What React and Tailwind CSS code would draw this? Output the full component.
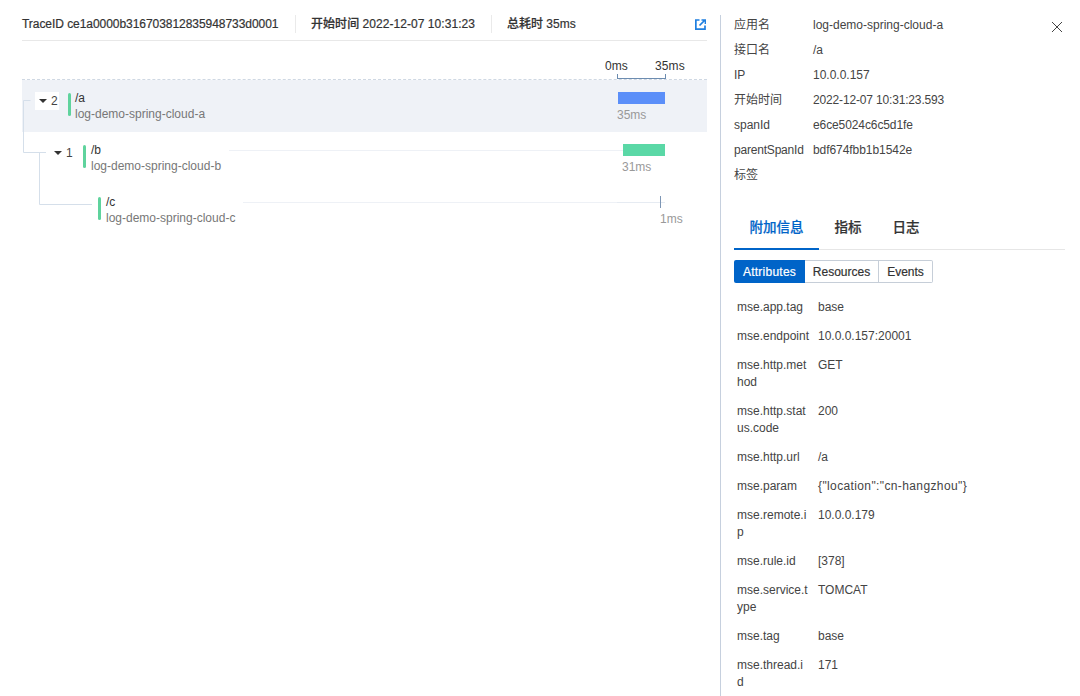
const FONT = "font-['Liberation_Sans','Noto_Sans_CJK_SC',sans-serif]";
const MEDIUM = "[-webkit-text-stroke:0.2px_currentColor]";

const spans = [
  { depth: 0, count: 2, name: "/a", app: "log-demo-spring-cloud-a", active: true, ms: "35ms", bar: "bg-[#5b8ff9]", left: 1, labelLeft: 0, width: 47, lineFrom: null },
  { depth: 1, count: 1, name: "/b", app: "log-demo-spring-cloud-b", active: false, ms: "31ms", bar: "bg-[#5ad8a6]", left: 6, labelLeft: 5, width: 42, lineFrom: 229 },
  { depth: 2, count: null, name: "/c", app: "log-demo-spring-cloud-c", active: false, ms: "1ms", bar: null, left: 43, labelLeft: 43, width: 1, lineFrom: 243 },
];

const info = [
  ["应用名", "log-demo-spring-cloud-a", ""],
  ["接口名", "/a", ""],
  ["IP", "10.0.0.157", ""],
  ["开始时间", "2022-12-07 10:31:23.593", "tracking-[-0.16px]"],
  ["spanId", "e6ce5024c6c5d1fe", "tracking-[-0.1px]"],
  ["parentSpanId", "bdf674fbb1b1542e", "tracking-[-0.06px]"],
  ["标签", "", ""],
];

const attrs = [
  ["mse.app.tag", "base", ""],
  ["mse.endpoint", "10.0.0.157:20001", "whitespace-nowrap"],
  ["mse.http.method", "GET", ""],
  ["mse.http.status.code", "200", ""],
  ["mse.http.url", "/a", ""],
  ["mse.param", '{"location":"cn-hangzhou"}', ""],
  ["mse.remote.ip", "10.0.0.179", ""],
  ["mse.rule.id", "[378]", ""],
  ["mse.service.type", "TOMCAT", ""],
  ["mse.tag", "base", ""],
  ["mse.thread.id", "171", ""],
];

function Row({ s }) {
  const toggleLeft = [13, 28, 0][s.depth];
  const barLeft = [46, 61, 76][s.depth];
  const textLeft = [53, 69, 84][s.depth];
  return (
    <div className={`relative h-[52px] ${s.active ? "bg-[#eff2f7]" : ""}`}>
      {s.count !== null && (
        <div
          className={`absolute top-[12px] flex h-[18px] items-center gap-[4px] pl-[4px] pr-[1px] text-[12px] text-[#444] ${s.active ? "bg-white" : ""}`}
          style={{ left: toggleLeft }}
        >
          <span className="h-0 w-0 border-x-[4px] border-t-[4px] border-x-transparent border-t-[#333]" />
          <span>{s.count}</span>
        </div>
      )}
      <div className="absolute top-[13px] h-[23px] w-[3px] rounded-[2px] bg-[#5fd39d]" style={{ left: barLeft }} />
      <div className="absolute top-[10px]" style={{ left: textLeft }}>
        <div className="h-[16px] text-[12px] leading-[16px] text-[#333]">{s.name}</div>
        <div className="h-[16px] whitespace-nowrap text-[12px] leading-[16px] text-[#777]">{s.app}</div>
      </div>
      {s.lineFrom && (
        <div
          className="absolute top-[18px] h-px bg-[#eef1f6]"
          style={{ left: s.lineFrom - 22, width: 643 - s.lineFrom + 22 }}
        />
      )}
      <div className="absolute left-[595px] top-0 h-full w-[48px]">
        {s.bar ? (
          <div className={`absolute top-[12px] h-[12px] ${s.bar}`} style={{ left: s.left, width: s.width }} />
        ) : (
          <>
            <div className="absolute left-0 top-[18px] h-px w-[48px] bg-[#e6ebf2]" />
            <div className="absolute top-[12px] h-[12px] w-px bg-[#7d96b5]" style={{ left: s.left }} />
          </>
        )}
        <div
          className="absolute top-[27px] whitespace-nowrap text-[12px] leading-[16px] text-[#999]"
          style={{ left: s.labelLeft }}
        >
          {s.ms}
        </div>
      </div>
    </div>
  );
}

function Trace() {
  return (
    <div className="w-[720px] shrink-0 pl-[22px] pr-[13px] pt-[8px]">
      <div className={`relative flex h-[33px] items-start border-b border-[#e8e8e8] pt-[7px] text-[12px] font-medium leading-[18px] text-[#333] ${MEDIUM}`}>
        <span className="w-[273px] whitespace-nowrap tracking-[-0.05px]">TraceID ce1a0000b316703812835948733d0001</span>
        <span className="mr-[15px] h-[18px] w-px bg-[#eaeaea]" />
        <span className="w-[180px] whitespace-nowrap tracking-[0.05px]">开始时间 2022-12-07 10:31:23</span>
        <span className="mr-[15px] h-[18px] w-px bg-[#eaeaea]" />
        <span className="whitespace-nowrap">总耗时 35ms</span>
        <svg className="absolute right-[1px] top-[11px] h-[11px] w-[11px]" viewBox="0 0 11 11" fill="none" stroke="#1f7fe0" strokeWidth="1.7">
          <path d="M4.5 1H.85v9.15H10V6.5" />
          <path d="M4.5 6.5L9.5 1.5M6.5 1h4v4" />
        </svg>
      </div>
      <div className="relative h-[39px] border-b border-dashed border-[#cfd8e3] text-[12px] text-[#333]">
        <span className="absolute left-[583px] top-[17px] leading-[16px] tracking-[0.1px]">0ms</span>
        <span className="absolute left-[633px] top-[17px] leading-[16px] tracking-[0.1px]">35ms</span>
        <div className="absolute bottom-0 left-[595px] h-[5px] w-[49px] border-x border-b border-[#6c8cb0]" />
      </div>
      <div className="relative">
        {spans.map((s) => (
          <Row key={s.name} s={s} />
        ))}
        <svg className="absolute left-0 top-0" width="80" height="130" fill="none" stroke="#d5dfea" strokeWidth="1">
          <path d="M8.5 20.5H1.5V72.5H24" />
          <path d="M17.5 73V124.5H70" />
        </svg>
      </div>
    </div>
  );
}

function Detail() {
  return (
    <div className="relative mt-[15px] h-[681px] flex-1 overflow-hidden border-l border-[#c6d0de] pl-[13px] pr-[15px] text-[12px] text-[#444]">
      <svg className="absolute right-[17px] top-[6px] h-[12px] w-[12px]" viewBox="0 0 12 12" stroke="#444" strokeWidth="1" fill="none">
        <path d="M1 1l10 10M11 1L1 11" />
      </svg>
      <div className="-mt-[3px] flex flex-col">
        {info.map(([k, v, t]) => (
          <div key={k} className="flex h-[25px] items-center leading-[18px]">
            <span className={`w-[79px] shrink-0 whitespace-nowrap ${k === "parentSpanId" ? "tracking-[-0.2px]" : ""}`}>{k}</span>
            <span className={`whitespace-nowrap ${t}`}>{v}</span>
          </div>
        ))}
      </div>
      <div className={`mt-[26px] flex h-[37px] border-b border-[#e6e6e6] text-[13.5px] font-medium ${MEDIUM}`}>
        <div className="-mb-px flex w-[85px] items-center justify-center border-b-2 border-[#0064c8] pb-[5px] text-[#0064c8]">附加信息</div>
        <div className="flex w-[58px] items-center justify-center pb-[6px] text-[#333]">指标</div>
        <div className="flex w-[58px] items-center justify-center pb-[6px] text-[#333]">日志</div>
      </div>
      <div className={`mt-[10px] flex h-[23px] w-[199px] text-[12px] font-medium text-[#333] ${MEDIUM}`}>
        <div className="flex w-[71px] items-center justify-center rounded-l-[2px] bg-[#0064c8] tracking-[0.25px] text-white">Attributes</div>
        <div className="flex w-[74px] items-center justify-center border-y border-r border-[#c6ced8]">Resources</div>
        <div className="flex flex-1 items-center justify-center rounded-r-[2px] border-y border-r border-[#c6ced8]">Events</div>
      </div>
      <div className="mt-[10px] flex flex-col pl-[3px]">
        {attrs.map(([k, v, nw]) => (
          <div key={k} className="flex py-[6px] leading-[17px]">
            <div className={`w-[81px] shrink-0 break-all pr-[9px] ${nw}`}>{k}</div>
            <div className={`whitespace-nowrap ${k === "mse.param" ? "tracking-[0.38px]" : ""}`}>{v}</div>
          </div>
        ))}
      </div>
    </div>
  );
}

export default function App() {
  return (
    <div className={`flex h-[696px] w-[1080px] overflow-hidden bg-white ${FONT}`}>
      <Trace />
      <Detail />
    </div>
  );
}
